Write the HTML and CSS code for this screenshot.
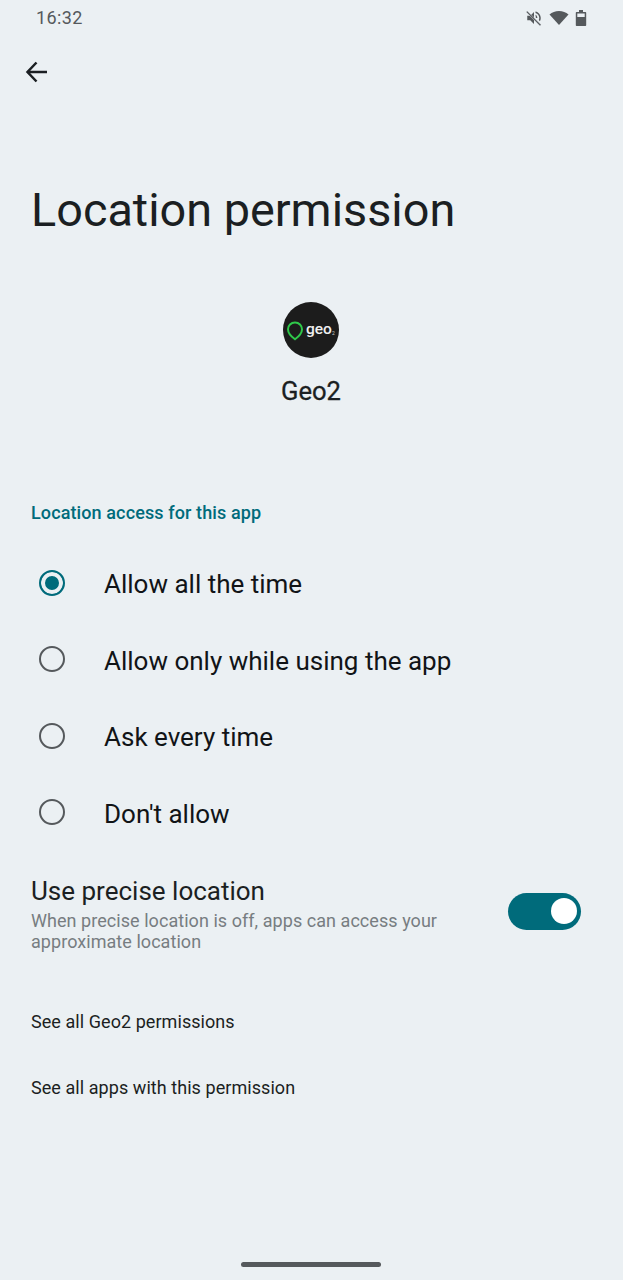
FILE: index.html
```html
<!DOCTYPE html>
<html lang="en">
  <head>
    <meta charset="UTF-8" />
    <meta name="viewport" content="width=device-width, initial-scale=1.0" />
    <title>Location permission</title>
    <link rel="stylesheet" href="styles.css">
  </head>
  <body>
    <div class="screen">
      <!-- Status bar -->
      <div class="status-bar">
        <span class="clock">16:32</span>
        <div class="status-icons">
          <svg width="18" height="18" viewBox="0 0 24 24" fill="#55595c">
            <path d="M3 9v6h4l5 5V4L7 9H3z"/>
            <path d="M14 7.500c1.500.8 2.500 2.500 2.500 4.500h-2zM14 3.200c4 .9 7 4.500 7 8.800 0 1.600-.4 3-1.100 4.300l-1.500-1.500c.4-.9.600-1.800.600-2.800 0-3.200-2.100-5.900-5-6.700z"/>
            <path d="M3 2.500 21.500 21l-1.500 1.500L1.500 4z" stroke="#ebf0f3" stroke-width=".6"/>
          </svg>
          <svg width="20" height="18" viewBox="0 0 20 18" fill="#55595c">
            <path d="M10 16 .5 5.500C3 3.200 6.300 2 10 2s7 1.200 9.500 3.500z"/>
          </svg>
          <svg width="12" height="18" viewBox="0 0 12 18" fill="#55595c">
            <path d="M4 1h4v2h2.500c.4 0 .7.300.7.700v12.600c0 .4-.3.700-.7.700h-9c-.4 0-.7-.3-.7-.7V3.700c0-.4.300-.7.700-.7H4z"/>
            <rect x="2.300" y="4.500" width="7.400" height="3.500" fill="#ebf0f3"/>
          </svg>
        </div>
      </div>

      <!-- App bar -->
      <div class="app-bar">
        <svg class="back" width="24" height="24" viewBox="0 0 24 24" fill="none" stroke="#1b1f22" stroke-width="2.500">
          <path d="M22 12H2.500"/>
          <path d="M11.500 2.500 2.500 12l9 9.500"/>
        </svg>
      </div>

      <h1 class="title">Location permission</h1>

      <div class="app-info">
        <div class="app-icon">
          <svg width="56" height="56" viewBox="0 0 56 56">
            <circle cx="28" cy="28" r="28" fill="#1c1c1c"/>
            <path d="M12 20.500c4 0 7 3 7 6.800 0 4-3.500 7.500-7 10-3.500-2.500-7-6-7-10 0-3.800 3-6.800 7-6.800z" fill="none" stroke="#2fc84a" stroke-width="2"/>
            <text x="23" y="32" class="logo-text">geo</text>
            <text x="49" y="33" class="logo-sub">2</text>
          </svg>
        </div>
        <div class="app-name">Geo2</div>
      </div>

      <div class="section-label">Location access for this app</div>

      <div class="options">
        <div class="option">
          <span class="radio selected"></span>
          <span class="option-text">Allow all the time</span>
        </div>
        <div class="option">
          <span class="radio"></span>
          <span class="option-text">Allow only while using the app</span>
        </div>
        <div class="option">
          <span class="radio"></span>
          <span class="option-text">Ask every time</span>
        </div>
        <div class="option">
          <span class="radio"></span>
          <span class="option-text">Don't allow</span>
        </div>
      </div>

      <div class="precise">
        <div class="precise-text">
          <div class="precise-title">Use precise location</div>
          <div class="precise-sub">When precise location is off, apps can access your approximate location</div>
        </div>
        <div class="switch"><span class="thumb"></span></div>
      </div>

      <div class="link first">See all Geo2 permissions</div>
      <div class="link">See all apps with this permission</div>

      <div class="nav-pill"></div>
    </div>
  </body>
</html>
```

FILE: styles.css
```css
html, body {
  margin: 0;
  padding: 0;
}

body {
  background-color: #ebf0f3;
  font-family: 'Roboto', sans-serif;
  color: #1b1f22;
}

.screen {
  display: flex;
  flex-direction: column;
  height: 1280px;
  overflow: hidden;
}

.status-bar {
  display: flex;
  justify-content: space-between;
  align-items: center;
  height: 35px;
  padding: 0 36px 0 36px;
}

.clock {
  font-size: 18px;
  font-weight: 400;
  color: #55595c;
  letter-spacing: 0.4px;
}

.status-icons {
  display: flex;
  align-items: center;
  gap: 6px;
}

.app-bar {
  display: flex;
  align-items: center;
  height: 73px;
  padding-left: 25px;
}

.title {
  margin: 70px 0 0;
  padding-left: 31px;
  font-size: 46.8px;
  line-height: 64px;
  font-weight: 400;
}

.app-info {
  display: flex;
  flex-direction: column;
  align-items: center;
  margin-top: 60px;
  padding-right: 1px;
}

.app-icon {
  width: 56px;
  height: 56px;
}

.logo-text {
  font-family: 'Roboto', sans-serif;
  font-size: 15.5px;
  font-weight: 500;
  fill: #f0f0f0;
}

.logo-sub {
  font-family: 'Roboto', sans-serif;
  font-size: 5px;
  fill: #cccccc;
}

.app-name {
  margin-top: 17px;
  font-size: 25.6px;
  line-height: 32px;
  font-weight: 400;
  -webkit-text-stroke: 0.3px #1b1f22;
}

.section-label {
  margin: 93px 0 0;
  padding-left: 31px;
  font-size: 18px;
  line-height: 26px;
  font-weight: 500;
  letter-spacing: 0.11px;
  color: #006b7b;
}

.options {
  display: flex;
  flex-direction: column;
  margin-top: 20px;
}

.option {
  display: flex;
  align-items: center;
  height: 76.5px;
  padding-left: 39px;
}

.radio {
  box-sizing: border-box;
  width: 26px;
  height: 26px;
  border: 2.5px solid #55595c;
  border-radius: 50%;
  margin: 0 39px 3px 0;
}

.radio.selected {
  border-color: #006b7b;
  background-color: #006b7b;
  box-shadow: inset 0 0 0 4px #ebf0f3;
}

.option-text {
  font-size: 26px;
  color: #111417;
}

.precise {
  display: flex;
  align-items: center;
  justify-content: space-between;
  padding: 0 42px 0 31px;
  margin-top: 21px;
}

.precise-text {
  width: 440px;
}

.precise-title {
  font-size: 26px;
  line-height: 37px;
}

.precise-sub {
  font-size: 18px;
  line-height: 21px;
  letter-spacing: 0.05px;
  color: #777d81;
}

.switch {
  box-sizing: border-box;
  display: flex;
  align-items: center;
  justify-content: flex-end;
  width: 73px;
  height: 37px;
  padding-right: 4px;
  margin-bottom: 3px;
  border-radius: 19px;
  background-color: #006b7b;
}

.thumb {
  width: 26px;
  height: 26px;
  border-radius: 50%;
  background-color: #ffffff;
}

.link {
  margin-top: 42px;
  padding-left: 31px;
  font-size: 18px;
  line-height: 24px;
  letter-spacing: 0.06px;
}

.link.first {
  margin-top: 58px;
}

.nav-pill {
  align-self: center;
  width: 140px;
  height: 5px;
  margin: auto 2px 13px 0;
  border-radius: 3px;
  background-color: #55595c;
}
```
